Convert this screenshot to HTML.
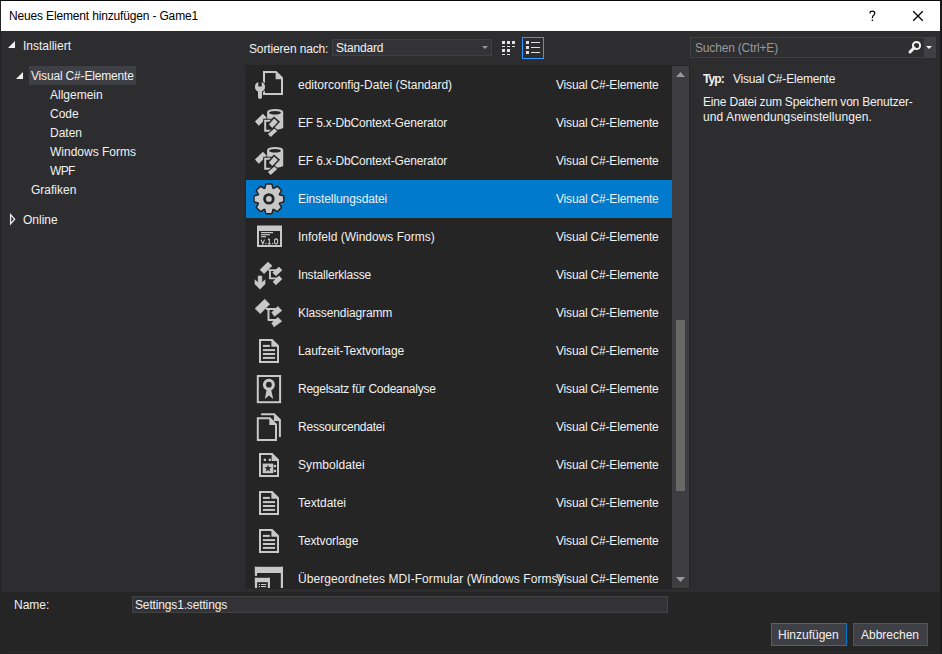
<!DOCTYPE html>
<html><head><meta charset="utf-8">
<style>
*{margin:0;padding:0;box-sizing:border-box}
html,body{width:942px;height:654px;overflow:hidden;background:#2d2d30}
body{position:relative;font-family:"Liberation Sans",sans-serif;font-size:12px;line-height:14px;color:#f1f1f1}
.a{position:absolute;white-space:nowrap}
#border{position:absolute;left:0;top:0;width:942px;height:654px;border-left:1px solid #242424;border-top:1px solid #0a0a0a;border-right:1px solid #181818;border-bottom:1px solid #222226}
#rb{position:absolute;left:940px;top:31px;width:1px;height:622px;background:#1f1f1f}
#bb{position:absolute;left:1px;top:652px;width:940px;height:1px;background:#2a2a2a}
#title{position:absolute;left:1px;top:1px;width:939px;height:30px;background:#fff}
#bottom{position:absolute;left:1px;top:592px;width:940px;height:61px;background:#252526}
#list{position:absolute;left:245px;top:65px;width:445px;height:524px;background:#252526;overflow:hidden}
.row{position:absolute;left:1px;width:426px;height:38px}
.row .n{position:absolute;left:52px;top:12px;white-space:nowrap}
.row .c{position:absolute;left:310px;top:12px;white-space:nowrap;letter-spacing:-0.18px}
.row svg{position:absolute;left:3px;top:0}
.sel{background:#007acc}
</style></head><body>
<div id="title">
  <div class="a" style="left:8px;top:8px;color:#000;letter-spacing:-0.16px">Neues Element hinzufügen - Game1</div>
  <svg class="a" style="left:866px;top:6px" width="14" height="16" viewBox="0 0 14 16"><path d="M3 6.4V6C3 4.8 3.9 4.1 5.4 4.1C6.9 4.1 7.8 4.9 7.8 6.2C7.8 7.3 7.2 7.9 6.4 8.5C5.7 9 5.4 9.5 5.4 10.4V11.3" fill="none" stroke="#000" stroke-width="1.15"/><rect x="4.7" y="12.6" width="1.4" height="1.4" fill="#000"/></svg>
  <svg class="a" style="left:910px;top:7px" width="14" height="14" viewBox="0 0 14 14"><path d="M2.2 3.2L11.8 12.8M11.8 3.2L2.2 12.8" stroke="#000" stroke-width="1.3"/></svg>
</div>

<!-- tree -->
<svg class="a" style="left:0;top:30px" width="30" height="200">
  <polygon points="8,18 15,18 15,11" fill="#f0f0f0"/>
  <polygon points="16,49 23,49 23,42" fill="#f0f0f0"/>
  <polygon points="10.6,184.6 14.7,189.2 10.6,193.8" fill="none" stroke="#e8e8e8" stroke-width="1.3"/>
</svg>
<div class="a" style="left:23px;top:39px">Installiert</div>
<div class="a" style="left:29px;top:66px;width:107px;height:19px;background:#3f3f46"></div>
<div class="a" style="left:31px;top:69px;letter-spacing:-0.17px">Visual C#-Elemente</div>
<div class="a" style="left:50px;top:88px">Allgemein</div>
<div class="a" style="left:50px;top:107px">Code</div>
<div class="a" style="left:50px;top:126px">Daten</div>
<div class="a" style="left:50px;top:145px">Windows Forms</div>
<div class="a" style="left:50px;top:164px;letter-spacing:-0.7px">WPF</div>
<div class="a" style="left:31px;top:183px">Grafiken</div>
<div class="a" style="left:23px;top:213px">Online</div>

<!-- toolbar -->
<div class="a" style="left:249px;top:42px;letter-spacing:-0.14px">Sortieren nach:</div>
<div class="a" style="left:332px;top:39px;width:160px;height:17px;background:#333337;border:1px solid #3f3f46"></div>
<div class="a" style="left:336px;top:41px;letter-spacing:-0.18px">Standard</div>
<svg class="a" style="left:480px;top:44px" width="10" height="8"><polygon points="2,2 8,2 5,5" fill="#999"/></svg>
<svg class="a" style="left:500px;top:37px" width="48" height="24">
  <g fill="#e0e0e0">
    <rect x="2" y="4" width="3" height="3"/><rect x="7" y="4" width="3" height="3"/><rect x="12" y="4" width="3" height="3"/>
    <rect x="2" y="9" width="3" height="1"/><rect x="7" y="9" width="3" height="1"/><rect x="12" y="9" width="3" height="1"/>
    <rect x="2" y="12" width="3" height="3"/><rect x="7" y="12" width="3" height="3"/>
    <rect x="2" y="17" width="3" height="1"/><rect x="7" y="17" width="3" height="1"/>
  </g>
  <rect x="22.5" y="0.5" width="21" height="21" fill="none" stroke="#3399ff" stroke-width="1"/>
  <g fill="#e0e0e0">
    <rect x="26" y="4" width="3" height="3"/><rect x="26" y="9" width="3" height="3"/><rect x="26" y="14" width="3" height="3"/>
    <rect x="31" y="5" width="9" height="1"/><rect x="31" y="10" width="9" height="1"/><rect x="31" y="15" width="9" height="1"/>
  </g>
</svg>

<!-- search -->
<div class="a" style="left:690px;top:37px;width:246px;height:21px;background:#2f2f32;border:1px solid #3f3f46"></div>
<div class="a" style="left:924px;top:38px;width:11px;height:19px;background:#3f3f46"></div>
<div class="a" style="left:695px;top:41px;color:#999;letter-spacing:-0.18px">Suchen (Ctrl+E)</div>
<svg class="a" style="left:906px;top:38px" width="30" height="20">
  <circle cx="10.5" cy="7.5" r="3.6" fill="none" stroke="#f1f1f1" stroke-width="2"/>
  <path d="M8.2 9.8L4 14" stroke="#f1f1f1" stroke-width="3" stroke-linecap="round"/>
  <polygon points="20,8 26,8 23,11" fill="#f1f1f1"/>
</svg>

<!-- list -->
<div id="list">
<div class="row" style="top:1px"><svg width="40" height="38" viewBox="0 0 40 38"><path d="M15 6H27L33 12V28H15Z" fill="none" stroke="#c8c8c8" stroke-width="2"/>
<polygon points="26.6,5 34,12.4 34,13.3 26.6,13.3" fill="#c8c8c8"/>
<path d="M9 25.4A5 5 0 0 1 9.3 16.1V20.5H12.7V16.1A5 5 0 0 1 13 25.4V31A2 2 0 0 1 9 31Z" fill="#c8c8c8" stroke="#252526" stroke-width="2" paint-order="stroke"/></svg><span class="n">editorconfig-Datei (Standard)</span><span class="c">Visual C#-Elemente</span></div>
<div class="row" style="top:39px"><svg width="40" height="38" viewBox="0 0 40 38"><path d="M18.1 8.2V23.2A8.05 2.6 0 0 0 34.2 23.2V8.2Z" fill="#c8c8c8"/>
<ellipse cx="26.15" cy="8" rx="8.05" ry="3.1" fill="#c8c8c8"/>
<ellipse cx="26" cy="8.8" rx="5.9" ry="1.8" fill="#252526"/>
<polygon points="5.9,17.6 13.9,9.8 17.8,13.7 9.8,21.8" fill="#c8c8c8" stroke="#252526" stroke-width="1" paint-order="stroke"/>
<path d="M24 16.7H16.2V26.7H21.5" fill="#252526" stroke="#252526" stroke-width="4"/>
<path d="M24 16.7H16.2V26.7H21.5" fill="none" stroke="#c8c8c8" stroke-width="2"/>
<polygon points="19.9,20.4 25.1,14.6 28.9,17.9 23.2,23.9" fill="#c8c8c8" stroke="#252526" stroke-width="3" paint-order="stroke"/>
<polygon points="18.9,30.1 25.4,24.4 28.2,27.1 21.7,32.9" fill="#c8c8c8" stroke="#252526" stroke-width="2" paint-order="stroke"/></svg><span class="n" style="letter-spacing:-0.17px">EF 5.x-DbContext-Generator</span><span class="c">Visual C#-Elemente</span></div>
<div class="row" style="top:77px"><svg width="40" height="38" viewBox="0 0 40 38"><path d="M18.1 8.2V23.2A8.05 2.6 0 0 0 34.2 23.2V8.2Z" fill="#c8c8c8"/>
<ellipse cx="26.15" cy="8" rx="8.05" ry="3.1" fill="#c8c8c8"/>
<ellipse cx="26" cy="8.8" rx="5.9" ry="1.8" fill="#252526"/>
<polygon points="5.9,17.6 13.9,9.8 17.8,13.7 9.8,21.8" fill="#c8c8c8" stroke="#252526" stroke-width="1" paint-order="stroke"/>
<path d="M24 16.7H16.2V26.7H21.5" fill="#252526" stroke="#252526" stroke-width="4"/>
<path d="M24 16.7H16.2V26.7H21.5" fill="none" stroke="#c8c8c8" stroke-width="2"/>
<polygon points="19.9,20.4 25.1,14.6 28.9,17.9 23.2,23.9" fill="#c8c8c8" stroke="#252526" stroke-width="3" paint-order="stroke"/>
<polygon points="18.9,30.1 25.4,24.4 28.2,27.1 21.7,32.9" fill="#c8c8c8" stroke="#252526" stroke-width="2" paint-order="stroke"/></svg><span class="n" style="letter-spacing:-0.17px">EF 6.x-DbContext-Generator</span><span class="c">Visual C#-Elemente</span></div>
<div class="row sel" style="top:115px"><svg width="40" height="38" viewBox="0 0 40 38"><path d="M16.40 8.70 L17.50 4.70 L22.30 4.70 L23.40 8.70 L24.64 9.21 L28.24 7.16 L31.64 10.56 L29.59 14.16 L30.10 15.40 L34.10 16.50 L34.10 21.30 L30.10 22.40 L29.59 23.64 L31.64 27.24 L28.24 30.64 L24.64 28.59 L23.40 29.10 L22.30 33.10 L17.50 33.10 L16.40 29.10 L15.16 28.59 L11.56 30.64 L8.16 27.24 L10.21 23.64 L9.70 22.40 L5.70 21.30 L5.70 16.50 L9.70 15.40 L10.21 14.16 L8.16 10.56 L11.56 7.16 L15.16 9.21Z" fill="#c8c8c8" stroke="#222" stroke-width="3" stroke-linejoin="round" paint-order="stroke"/>
<circle cx="19.9" cy="18.9" r="4.3" fill="#c8c8c8" stroke="#252526" stroke-width="2.8"/></svg><span class="n" style="letter-spacing:-0.09px">Einstellungsdatei</span><span class="c">Visual C#-Elemente</span></div>
<div class="row" style="top:153px"><svg width="40" height="38" viewBox="0 0 40 38"><rect x="9" y="8.7" width="23" height="19.3" fill="none" stroke="#c8c8c8" stroke-width="2"/>
<rect x="8" y="7.7" width="25" height="5.3" fill="#c8c8c8"/>
<rect x="12" y="14" width="12" height="1.2" fill="#c8c8c8"/><rect x="12" y="16.1" width="9" height="1.2" fill="#c8c8c8"/><rect x="12" y="18.1" width="5" height="1.2" fill="#c8c8c8"/>
<path d="M12.1 21.6L13.8 26L15.5 21.6M20.3 20.6V26M18.9 21.8L20.3 20.6M18.8 25.9H21.8" fill="none" stroke="#c8c8c8" stroke-width="1.1"/><rect x="16.2" y="24.9" width="1.2" height="1.2" fill="#c8c8c8"/><rect x="23.1" y="24.9" width="1.2" height="1.2" fill="#c8c8c8"/><ellipse cx="27.1" cy="23.4" rx="1.6" ry="2.5" fill="none" stroke="#c8c8c8" stroke-width="1.1"/></svg><span class="n">Infofeld (Windows Forms)</span><span class="c">Visual C#-Elemente</span></div>
<div class="row" style="top:191px"><svg width="40" height="38" viewBox="0 0 40 38"><g stroke-linejoin="round"><polygon points="11.1,13.7 18.9,6.2 23,9.8 15,17.6" fill="#c8c8c8" stroke="#c8c8c8" stroke-width="0.7"/>
<path d="M19.4 14.1H28.5M21 13.2V22.4H28.5" fill="none" stroke="#c8c8c8" stroke-width="1.9"/>
<polygon points="23.8,16.6 30,11.1 32.9,14.2 26.9,19.7" fill="#c8c8c8" stroke="#c8c8c8" stroke-width="0.7"/>
<polygon points="24.1,25.7 30,19.9 32.9,23.1 26.9,28.8" fill="#c8c8c8" stroke="#c8c8c8" stroke-width="0.7"/>
<polygon points="9.1,19.9 12.9,19.9 12.9,26.5 16.1,23.8 16.1,28 11,33.2 5.9,28 5.9,23.8 9.1,26.5" fill="#c8c8c8" stroke="#c8c8c8" stroke-width="0.5"/></g></svg><span class="n" style="letter-spacing:-0.2px">Installerklasse</span><span class="c">Visual C#-Elemente</span></div>
<div class="row" style="top:229px"><svg width="40" height="38" viewBox="0 0 40 38"><g stroke-linejoin="round"><polygon points="6.1,14.6 15.7,5.3 20.6,10.2 11.3,19.6" fill="#c8c8c8" stroke="#c8c8c8" stroke-width="0.7"/>
<path d="M17 14.9H27.2M19.5 14V26.1H27.7" fill="none" stroke="#c8c8c8" stroke-width="2"/>
<polygon points="22.8,18.5 28.9,12.4 32.7,16.6 25.6,22.3" fill="#c8c8c8" stroke="#c8c8c8" stroke-width="0.7"/>
<polygon points="22.8,28.9 28.9,23.4 32.7,27.3 25,32.8" fill="#c8c8c8" stroke="#c8c8c8" stroke-width="0.7"/></g></svg><span class="n" style="letter-spacing:-0.12px">Klassendiagramm</span><span class="c">Visual C#-Elemente</span></div>
<div class="row" style="top:267px"><svg width="40" height="38" viewBox="0 0 40 38"><path d="M11 8H23L29 14V30H11Z" fill="none" stroke="#c8c8c8" stroke-width="2"/>
<polygon points="22.4,7 30,14.6 30,14.7 22.4,14.7" fill="#c8c8c8"/>
<rect x="13.9" y="12.9" width="7" height="2" fill="#c8c8c8"/>
<rect x="13.9" y="17.1" width="12.2" height="2" fill="#c8c8c8"/>
<rect x="13.9" y="21" width="12.2" height="2" fill="#c8c8c8"/>
<rect x="13.9" y="24.9" width="12.2" height="2" fill="#c8c8c8"/></svg><span class="n" style="letter-spacing:-0.06px">Laufzeit-Textvorlage</span><span class="c">Visual C#-Elemente</span></div>
<div class="row" style="top:305px"><svg width="40" height="38" viewBox="0 0 40 38"><rect x="8.8" y="6" width="22.3" height="26.2" fill="none" stroke="#c8c8c8" stroke-width="2"/>
<polygon points="17.9,18.5 21.9,18.5 24.2,29 20,25.4 15.8,29" fill="#c8c8c8"/>
<circle cx="19.9" cy="14.7" r="4.45" fill="#252526" stroke="#c8c8c8" stroke-width="3.1"/></svg><span class="n" style="letter-spacing:-0.26px">Regelsatz für Codeanalyse</span><span class="c">Visual C#-Elemente</span></div>
<div class="row" style="top:343px"><svg width="40" height="38" viewBox="0 0 40 38"><path d="M12.8 6.2H25.1L30.9 12V28.3" fill="none" stroke="#c8c8c8" stroke-width="2" stroke-linecap="round"/>
<polygon points="24.9,5.2 31.9,12.2 31.9,13 24.9,13" fill="#c8c8c8"/>
<path d="M8.8 10.2H20.8L27 16.4V31.9H8.8Z" fill="#252526" stroke="#c8c8c8" stroke-width="2"/>
<polygon points="20.3,9.2 28,16.9 20.3,16.9" fill="#c8c8c8"/></svg><span class="n" style="letter-spacing:-0.22px">Ressourcendatei</span><span class="c">Visual C#-Elemente</span></div>
<div class="row" style="top:381px"><svg width="40" height="38" viewBox="0 0 40 38"><path d="M11 8H23L29 14V30H11Z" fill="none" stroke="#c8c8c8" stroke-width="2"/>
<polygon points="22.6,7 30,14.4 30,14.9 22.6,14.9" fill="#c8c8c8"/>
<rect x="14.7" y="12.7" width="2.3" height="2.3" fill="#c8c8c8"/><rect x="19.8" y="12.7" width="2.1" height="2.3" fill="#c8c8c8"/>
<rect x="13.7" y="17.6" width="10.6" height="9.6" fill="#c8c8c8"/>
<rect x="24.8" y="18.9" width="2.3" height="2.3" fill="#c8c8c8"/><rect x="24.8" y="23.8" width="2.3" height="2.3" fill="#c8c8c8"/>
<polygon points="18.95,18.60 19.86,21.25 22.66,21.29 20.42,22.98 21.24,25.66 18.95,24.05 16.66,25.66 17.48,22.98 15.24,21.29 18.04,21.25" fill="#252526"/></svg><span class="n" style="letter-spacing:0.07px">Symboldatei</span><span class="c">Visual C#-Elemente</span></div>
<div class="row" style="top:419px"><svg width="40" height="38" viewBox="0 0 40 38"><path d="M11 8H23L29 14V30H11Z" fill="none" stroke="#c8c8c8" stroke-width="2"/>
<polygon points="22.4,7 30,14.6 30,14.7 22.4,14.7" fill="#c8c8c8"/>
<rect x="13.9" y="12.9" width="7" height="2" fill="#c8c8c8"/>
<rect x="13.9" y="17.1" width="12.2" height="2" fill="#c8c8c8"/>
<rect x="13.9" y="21" width="12.2" height="2" fill="#c8c8c8"/>
<rect x="13.9" y="24.9" width="12.2" height="2" fill="#c8c8c8"/></svg><span class="n">Textdatei</span><span class="c">Visual C#-Elemente</span></div>
<div class="row" style="top:457px"><svg width="40" height="38" viewBox="0 0 40 38"><path d="M11 8H23L29 14V30H11Z" fill="none" stroke="#c8c8c8" stroke-width="2"/>
<polygon points="22.4,7 30,14.6 30,14.7 22.4,14.7" fill="#c8c8c8"/>
<rect x="13.9" y="12.9" width="7" height="2" fill="#c8c8c8"/>
<rect x="13.9" y="17.1" width="12.2" height="2" fill="#c8c8c8"/>
<rect x="13.9" y="21" width="12.2" height="2" fill="#c8c8c8"/>
<rect x="13.9" y="24.9" width="12.2" height="2" fill="#c8c8c8"/></svg><span class="n" style="letter-spacing:-0.1px">Textvorlage</span><span class="c">Visual C#-Elemente</span></div>
<div class="row" style="top:495px"><svg width="40" height="38" viewBox="0 0 40 38"><rect x="5.9" y="6.8" width="28.1" height="6.2" fill="#c8c8c8"/>
<rect x="5.9" y="6.8" width="2.2" height="9.1" fill="#c8c8c8"/>
<rect x="31.8" y="6.8" width="2.2" height="22" fill="#c8c8c8"/>
<rect x="5.9" y="17.8" width="15.1" height="4.4" fill="#c8c8c8"/>
<rect x="5.9" y="17.8" width="2.2" height="11" fill="#c8c8c8"/>
<rect x="18.8" y="17.8" width="2.2" height="11" fill="#c8c8c8"/>
<rect x="9.8" y="24" width="1.2" height="1" fill="#c8c8c8"/><rect x="12" y="24" width="5.1" height="1" fill="#c8c8c8"/>
<rect x="9.8" y="26" width="1.2" height="1.1" fill="#c8c8c8"/><rect x="12" y="26" width="5.1" height="1.1" fill="#c8c8c8"/></svg><span class="n" style="letter-spacing:0.07px">Übergeordnetes MDI-Formular (Windows Forms)</span><span class="c">Visual C#-Elemente</span></div>
</div><div class="a" style="left:245px;top:588px;width:445px;height:1px;background:#252526"></div>
<!-- scrollbar -->
<div class="a" style="left:672px;top:66px;width:17px;height:522px;background:#3e3e42"></div>
<div class="a" style="left:676px;top:320px;width:9px;height:171px;background:#686868"></div>
<svg class="a" style="left:672px;top:66px" width="17" height="522">
  <polygon points="4,11 13,11 8.5,6" fill="#999"/>
  <polygon points="4,511 13,511 8.5,516" fill="#999"/>
</svg>

<!-- right panel -->
<div class="a" style="left:703px;top:72px;font-weight:bold;letter-spacing:-0.9px">Typ:</div>
<div class="a" style="left:733px;top:72px;letter-spacing:-0.2px">Visual C#-Elemente</div>
<div class="a" style="left:703px;top:95px;letter-spacing:-0.19px">Eine Datei zum Speichern von Benutzer-</div>
<div class="a" style="left:703px;top:110px;letter-spacing:0.1px">und Anwendungseinstellungen.</div>

<!-- bottom -->
<div id="bottom"></div>
<div class="a" style="left:14px;top:598px">Name:</div>
<div class="a" style="left:132px;top:596px;width:536px;height:17px;background:#333337;border:1px solid #434346"></div>
<div class="a" style="left:135px;top:598px;letter-spacing:-0.15px">Settings1.settings</div>
<div class="a" style="left:771px;top:623px;width:76px;height:23px;background:#3f3f46;border:1px solid #007acc"></div>
<div class="a" style="left:778px;top:628px">Hinzufügen</div>
<div class="a" style="left:853px;top:623px;width:75px;height:23px;background:#3f3f46;border:1px solid #555"></div>
<div class="a" style="left:861px;top:628px">Abbrechen</div>

<div id="rb"></div><div class="a" style="left:940px;top:1px;width:1px;height:30px;background:#1e1e1e"></div><div id="bb"></div><div id="border"></div>
</body></html>
